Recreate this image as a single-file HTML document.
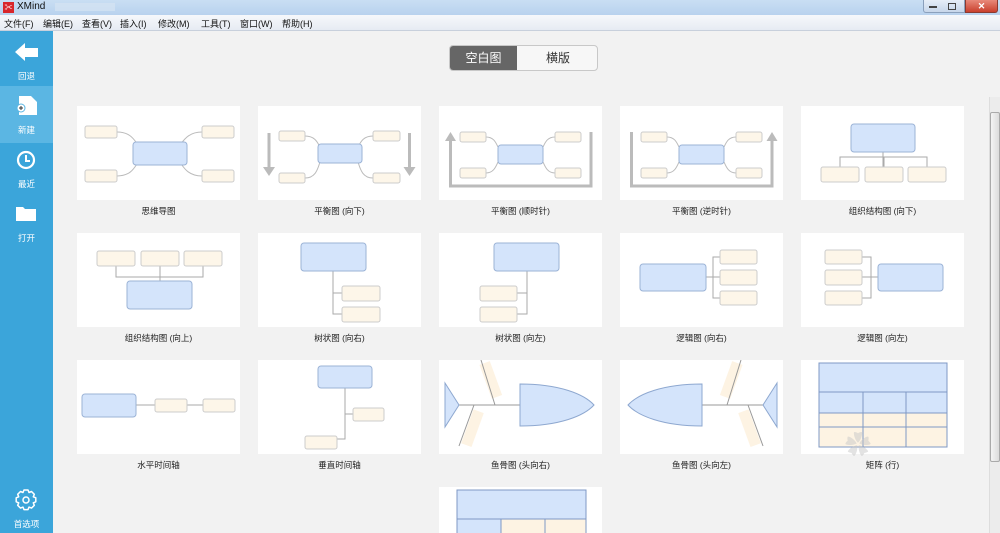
<!DOCTYPE html>
<html style="width:1000px;height:533px;overflow:hidden"><head><meta charset="utf-8"><style>
*{margin:0;padding:0;box-sizing:border-box}
body{width:1000px;height:533px;overflow:hidden;background:#f2f2f2;font-family:"Liberation Sans","Noto Sans CJK SC",sans-serif;position:relative}
.a{position:absolute}
.title{left:0;top:0;width:1000px;height:15px;background:linear-gradient(#c9def3,#b8d2ee)}
.menu{left:0;top:15px;width:1000px;height:16px;background:linear-gradient(#f6f8fb,#e6ebf3);border-bottom:1px solid #c8d0dc;font-size:9px;color:#111}
.menu span{position:absolute;top:2px}
.side{left:0;top:31px;width:53px;height:502px;background:#3ba5da}
.sl{position:absolute;width:53px;text-align:center;color:#fff;font-size:8.5px}
.card{position:absolute;width:163px;height:94px;background:#fff}
.lab{position:absolute;width:163px;text-align:center;font-size:8.5px;color:#222}
svg{position:absolute;left:0;top:0}
</style></head><body>
<div class="a title"></div>
<div class="a" style="left:3px;top:2px;width:11px;height:11px;background:#d8262b;color:#fff;font-size:8px;line-height:11px;text-align:center;font-weight:bold">✂</div>
<div class="a" style="left:17px;top:1px;font-size:10px;color:#111">XMind</div>
<div class="a" style="left:55px;top:3px;width:60px;height:8px;background:#d6e4f2;opacity:.7"></div>
<div class="a" style="left:923px;top:0;width:42px;height:13px;background:linear-gradient(#e6eef8,#c6d6ea);border:1px solid #8aa0bc;border-top:0;border-radius:0 0 0 3px"></div>
<div class="a" style="left:929px;top:6px;width:8px;height:2px;background:#444"></div>
<div class="a" style="left:948px;top:3px;width:8px;height:7px;border:1px solid #444"></div>
<div class="a" style="left:965px;top:0;width:33px;height:13px;background:linear-gradient(#e8897a,#c9402d);border:1px solid #8a3a30;border-top:0;border-radius:0 0 3px 0;color:#fff;font-size:9px;text-align:center;line-height:12px;font-weight:bold">✕</div>
<div class="a menu">
<span style="left:4px">文件(F)</span><span style="left:43px">编辑(E)</span><span style="left:82px">查看(V)</span><span style="left:120px">插入(I)</span><span style="left:158px">修改(M)</span><span style="left:201px">工具(T)</span><span style="left:240px">窗口(W)</span><span style="left:282px">帮助(H)</span>
</div>
<div class="a side"></div>
<div class="a" style="left:0;top:86px;width:53px;height:57px;background:#5bb6e3"></div>
<svg width="53" height="533" style="left:0;top:0">
<path d="M15 52 L25 43 L25 48 L38 48 L38 57 L25 57 L25 61 Z" fill="#fff"/>
<path d="M19 96 L31 96 L37 102 L37 115 L19 115 Z" fill="#fff"/>
<circle cx="21" cy="108" r="4" fill="#fff" stroke="#5bb6e3"/>
<path d="M19 108h4M21 106v4" stroke="#333" stroke-width="1"/>
<circle cx="26" cy="160" r="8" fill="none" stroke="#fff" stroke-width="2.2"/>
<path d="M26 155 V161 H30" fill="none" stroke="#fff" stroke-width="2"/>
<path d="M16 207 H23 L25 209 H36 V221 H16 Z" fill="#fff"/>
<path d="M24 490 h4 l1 2.5 l2.5 -1 l2.8 2.8 l-1 2.5 l2.5 1 v4 l-2.5 1 l1 2.5 l-2.8 2.8 l-2.5 -1 l-1 2.5 h-4 l-1 -2.5 l-2.5 1 l-2.8 -2.8 l1 -2.5 l-2.5 -1 v-4 l2.5 -1 l-1 -2.5 l2.8 -2.8 l2.5 1 z" fill="none" stroke="#fff" stroke-width="1.5" stroke-linejoin="round"/>
<circle cx="26" cy="500" r="3" fill="none" stroke="#fff" stroke-width="1.5"/>
</svg>
<div class="sl" style="top:70px">回退</div>
<div class="sl" style="top:124px">新建</div>
<div class="sl" style="top:178px">最近</div>
<div class="sl" style="top:232px">打开</div>
<div class="sl" style="top:518px">首选项</div>

<div class="a" style="left:449px;top:45px;width:149px;height:26px;border:1px solid #c8c8c8;border-radius:4px;background:#f7f7f7;overflow:hidden">
<div class="a" style="left:0;top:0;width:67px;height:26px;background:#666;color:#fff;font-size:12px;text-align:center;line-height:25px">空白图</div>
<div class="a" style="left:67px;top:0;width:82px;height:26px;color:#333;font-size:12px;text-align:center;line-height:25px">横版</div>
</div>

<div class="a" style="left:989px;top:97px;width:11px;height:436px;background:#ececec;border-left:1px solid #ddd"></div>
<div class="a" style="left:990px;top:112px;width:10px;height:350px;background:linear-gradient(90deg,#f4f4f4,#dcdcdc);border:1px solid #aaa;border-radius:2px"></div>

<!-- Row 1 -->
<div class="card" style="left:77px;top:106px"><svg width="163" height="94">
<g fill="none" stroke="#bbb"><path d="M40 26 C55 26 58 36 62 40M40 70 C55 70 58 60 62 55M125 26 C110 26 106 36 102 40M125 70 C110 70 106 60 102 55"/></g>
<g fill="#fdf6e9" stroke="#ccc"><rect x="8" y="20" width="32" height="12" rx="2"/><rect x="8" y="64" width="32" height="12" rx="2"/><rect x="125" y="20" width="32" height="12" rx="2"/><rect x="125" y="64" width="32" height="12" rx="2"/></g>
<rect x="56" y="36" width="54" height="23" rx="3" fill="#d4e4fb" stroke="#9bb3d6"/></svg></div>
<div class="lab" style="left:77px;top:205px">思维导图</div>

<div class="card" style="left:258px;top:106px"><svg width="163" height="94">
<g fill="none" stroke="#bbb"><path d="M47 30 C58 30 60 38 62 41M47 72 C58 72 60 62 62 56M115 30 C104 30 102 38 100 41M115 72 C104 72 102 62 100 56"/></g>
<g fill="#fdf6e9" stroke="#ccc"><rect x="21" y="25" width="26" height="10" rx="2"/><rect x="21" y="67" width="26" height="10" rx="2"/><rect x="115" y="25" width="27" height="10" rx="2"/><rect x="115" y="67" width="27" height="10" rx="2"/></g>
<rect x="60" y="38" width="44" height="19" rx="3" fill="#d4e4fb" stroke="#9bb3d6"/>
<g fill="#bbb"><rect x="9.5" y="27" width="3" height="36"/><path d="M5 61 L17 61 L11 70Z"/><rect x="150" y="27" width="3" height="36"/><path d="M145.5 61 L157.5 61 L151.5 70Z"/></g></svg></div>
<div class="lab" style="left:258px;top:205px">平衡图 (向下)</div>

<div class="card" style="left:439px;top:106px"><svg width="163" height="94">
<g fill="none" stroke="#bbb"><path d="M47 31 C55 31 57 37 59 41M47 67 C55 67 57 60 59 56M116 31 C108 31 106 37 104 41M116 67 C108 67 106 60 104 56"/></g>
<g fill="#fdf6e9" stroke="#ccc"><rect x="21" y="26" width="26" height="10" rx="2"/><rect x="21" y="62" width="26" height="10" rx="2"/><rect x="116" y="26" width="26" height="10" rx="2"/><rect x="116" y="62" width="26" height="10" rx="2"/></g>
<rect x="59" y="39" width="45" height="19" rx="3" fill="#d4e4fb" stroke="#9bb3d6"/>
<path d="M11.5 32 V80 H152 V26" fill="none" stroke="#bbb" stroke-width="3"/><path d="M6 35 L17 35 L11.5 26Z" fill="#bbb"/></svg></div>
<div class="lab" style="left:439px;top:205px">平衡图 (顺时针)</div>

<div class="card" style="left:620px;top:106px"><svg width="163" height="94">
<g fill="none" stroke="#bbb"><path d="M47 31 C55 31 57 37 59 41M47 67 C55 67 57 60 59 56M116 31 C108 31 106 37 104 41M116 67 C108 67 106 60 104 56"/></g>
<g fill="#fdf6e9" stroke="#ccc"><rect x="21" y="26" width="26" height="10" rx="2"/><rect x="21" y="62" width="26" height="10" rx="2"/><rect x="116" y="26" width="26" height="10" rx="2"/><rect x="116" y="62" width="26" height="10" rx="2"/></g>
<rect x="59" y="39" width="45" height="19" rx="3" fill="#d4e4fb" stroke="#9bb3d6"/>
<path d="M11.5 26 V80 H152 V32" fill="none" stroke="#bbb" stroke-width="3"/><path d="M146.5 35 L157.5 35 L152 26Z" fill="#bbb"/></svg></div>
<div class="lab" style="left:620px;top:205px">平衡图 (逆时针)</div>

<div class="card" style="left:801px;top:106px"><svg width="163" height="94">
<path d="M82 46 V61 M39 61 V51 H126 V61 M83 51 V61" fill="none" stroke="#aaa"/>
<rect x="50" y="18" width="64" height="28" rx="3" fill="#d4e4fb" stroke="#9bb3d6"/>
<g fill="#fdf6e9" stroke="#ccc"><rect x="20" y="61" width="38" height="15" rx="2"/><rect x="64" y="61" width="38" height="15" rx="2"/><rect x="107" y="61" width="38" height="15" rx="2"/></g></svg></div>
<div class="lab" style="left:801px;top:205px">组织结构图 (向下)</div>

<!-- Row 2 -->
<div class="card" style="left:77px;top:233px"><svg width="163" height="94">
<path d="M39 33 V44 H126 V33 M83 33 V48" fill="none" stroke="#aaa"/>
<g fill="#fdf6e9" stroke="#ccc"><rect x="20" y="18" width="38" height="15" rx="2"/><rect x="64" y="18" width="38" height="15" rx="2"/><rect x="107" y="18" width="38" height="15" rx="2"/></g>
<rect x="50" y="48" width="65" height="28" rx="3" fill="#d4e4fb" stroke="#9bb3d6"/></svg></div>
<div class="lab" style="left:77px;top:332px">组织结构图 (向上)</div>

<div class="card" style="left:258px;top:233px"><svg width="163" height="94">
<path d="M75 38 V81 H84 M75 60 H84" fill="none" stroke="#aaa"/>
<rect x="43" y="10" width="65" height="28" rx="3" fill="#d4e4fb" stroke="#9bb3d6"/>
<g fill="#fdf6e9" stroke="#ccc"><rect x="84" y="53" width="38" height="15" rx="2"/><rect x="84" y="74" width="38" height="15" rx="2"/></g></svg></div>
<div class="lab" style="left:258px;top:332px">树状图 (向右)</div>

<div class="card" style="left:439px;top:233px"><svg width="163" height="94">
<path d="M88 38 V81 H78 M88 60 H78" fill="none" stroke="#aaa"/>
<rect x="55" y="10" width="65" height="28" rx="3" fill="#d4e4fb" stroke="#9bb3d6"/>
<g fill="#fdf6e9" stroke="#ccc"><rect x="41" y="53" width="37" height="15" rx="2"/><rect x="41" y="74" width="37" height="15" rx="2"/></g></svg></div>
<div class="lab" style="left:439px;top:332px">树状图 (向左)</div>

<div class="card" style="left:620px;top:233px"><svg width="163" height="94">
<path d="M86 44 H93 M100 24 H93 V65 H100 M93 44 H100" fill="none" stroke="#aaa"/>
<rect x="20" y="31" width="66" height="27" rx="3" fill="#d4e4fb" stroke="#9bb3d6"/>
<g fill="#fdf6e9" stroke="#ccc"><rect x="100" y="17" width="37" height="14" rx="2"/><rect x="100" y="37" width="37" height="15" rx="2"/><rect x="100" y="58" width="37" height="14" rx="2"/></g></svg></div>
<div class="lab" style="left:620px;top:332px">逻辑图 (向右)</div>

<div class="card" style="left:801px;top:233px"><svg width="163" height="94">
<path d="M77 44 H70 M61 24 H70 V65 H61 M70 44 H61" fill="none" stroke="#aaa"/>
<rect x="77" y="31" width="65" height="27" rx="3" fill="#d4e4fb" stroke="#9bb3d6"/>
<g fill="#fdf6e9" stroke="#ccc"><rect x="24" y="17" width="37" height="14" rx="2"/><rect x="24" y="37" width="37" height="15" rx="2"/><rect x="24" y="58" width="37" height="14" rx="2"/></g></svg></div>
<div class="lab" style="left:801px;top:332px">逻辑图 (向左)</div>

<!-- Row 3 -->
<div class="card" style="left:77px;top:360px"><svg width="163" height="94">
<path d="M59 45 H78 M110 45 H126" stroke="#aaa"/>
<rect x="5" y="34" width="54" height="23" rx="3" fill="#d4e4fb" stroke="#9bb3d6"/>
<g fill="#fdf6e9" stroke="#ccc"><rect x="78" y="39" width="32" height="13" rx="2"/><rect x="126" y="39" width="32" height="13" rx="2"/></g></svg></div>
<div class="lab" style="left:77px;top:459px">水平时间轴</div>

<div class="card" style="left:258px;top:360px"><svg width="163" height="94">
<path d="M87 28 V79 H79 M87 54 H95" fill="none" stroke="#aaa"/>
<rect x="60" y="6" width="54" height="22" rx="3" fill="#d4e4fb" stroke="#9bb3d6"/>
<g fill="#fdf6e9" stroke="#ccc"><rect x="95" y="48" width="31" height="13" rx="2"/><rect x="47" y="76" width="32" height="13" rx="2"/></g></svg></div>
<div class="lab" style="left:258px;top:459px">垂直时间轴</div>

<div class="card" style="left:439px;top:360px"><svg width="163" height="94">
<g transform="rotate(-20 52 22)"><rect x="47" y="2" width="11" height="36" fill="#fdf3e3"/></g>
<g transform="rotate(20 33 68)"><rect x="28" y="50" width="11" height="36" fill="#fdf3e3"/></g>
<path d="M20 45 H81 M56 45 L42 0 M35 45 L20 86" stroke="#999" fill="none"/>
<path d="M6 23 L20 45 L6 67 Z" fill="#d4e4fb" stroke="#8ea8d0"/>
<path d="M81 24 C120 24 145 34 155 45 C145 56 120 66 81 66 Z" fill="#d4e4fb" stroke="#8ea8d0"/></svg></div>
<div class="lab" style="left:439px;top:459px">鱼骨图 (头向右)</div>

<div class="card" style="left:620px;top:360px"><svg width="163" height="94">
<g transform="scale(-1,1) translate(-163,0)">
<g transform="rotate(-20 52 22)"><rect x="47" y="2" width="11" height="36" fill="#fdf3e3"/></g>
<g transform="rotate(20 33 68)"><rect x="28" y="50" width="11" height="36" fill="#fdf3e3"/></g>
<path d="M20 45 H81 M56 45 L42 0 M35 45 L20 86" stroke="#999" fill="none"/>
<path d="M6 23 L20 45 L6 67 Z" fill="#d4e4fb" stroke="#8ea8d0"/>
<path d="M81 24 C120 24 145 34 155 45 C145 56 120 66 81 66 Z" fill="#d4e4fb" stroke="#8ea8d0"/></g></svg></div>
<div class="lab" style="left:620px;top:459px">鱼骨图 (头向左)</div>

<div class="card" style="left:801px;top:360px"><svg width="163" height="94">
<rect x="18" y="3" width="128" height="50" fill="#d4e4fb"/><rect x="18" y="53" width="128" height="34" fill="#fdf3e3"/>
<path d="M18 3 H146 V87 H18 Z M18 32 H146 M18 53 H146 M18 67 H146 M62 32 V87 M105 32 V87" fill="none" stroke="#7f98c4"/></svg></div>
<div class="lab" style="left:801px;top:459px">矩阵 (行)</div>

<div class="card" style="left:439px;top:487px;height:46px"><svg width="163" height="46">
<rect x="18" y="3" width="129" height="43" fill="#d4e4fb"/><rect x="62" y="32" width="85" height="14" fill="#fdf3e3"/>
<path d="M18 46 V3 H147 V46 M18 32 H147 M62 32 V46 M106 32 V46" fill="none" stroke="#7f98c4"/></svg></div>

<div class="a" style="left:845px;top:425px;font-size:26px;color:rgba(200,200,200,.5)">✿</div>
</body></html>
